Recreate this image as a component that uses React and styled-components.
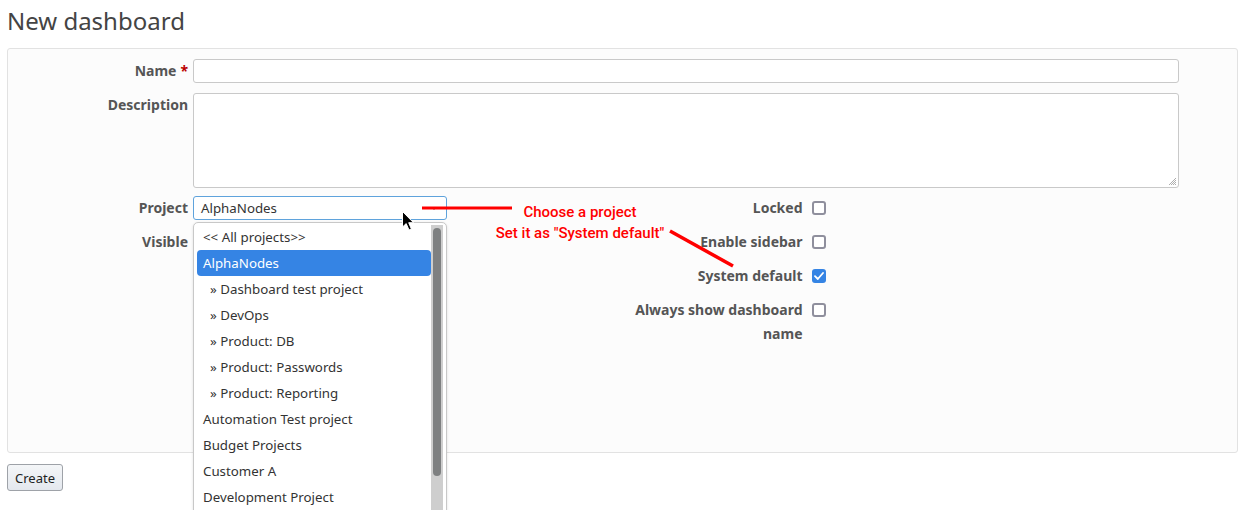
import React from "react";
import styled, { createGlobalStyle } from "styled-components";

const GlobalStyle = createGlobalStyle`
  html, body { margin: 0; padding: 0; overflow: hidden; background: #fff; }
  body { font-family: "Noto Sans", "Open Sans", sans-serif; color: #333; }
  * { box-sizing: border-box; }
`;

const Page = styled.div`
  position: relative;
  padding: 6px 11px 0 7px;
  height: 510px;
  overflow: hidden;
`;

const Title = styled.h2`
  margin: 0 0 12px;
  font-size: 24px;
  line-height: 30px;
  font-weight: 400;
  color: #444;
`;

const Box = styled.div`
  background: #fcfcfc;
  border: 1px solid #e2e2e2;
  border-radius: 3px;
  padding: 10px 0 96px;
`;

const FieldRow = styled.div`
  display: grid;
  grid-template-columns: 180px 1fr;
  column-gap: 5px;
  align-items: ${(p) => (p.$top ? "start" : "center")};
  padding-right: ${(p) => (p.$wide ? "58px" : "0")};
  margin-bottom: 10px;
`;

const Label = styled.label`
  text-align: right;
  font-weight: 700;
  font-size: 14px;
  line-height: 24px;
  color: #555;
`;

const Required = styled.span`
  color: #bb0000;
  margin-left: 4px;
`;

const TextInput = styled.div`
  height: 24px;
  background: #fff;
  border: 1px solid #c9c9c9;
  border-radius: 3px;
`;

const TextArea = styled.div`
  position: relative;
  height: 95px;
  background: #fff;
  border: 1px solid #c9c9c9;
  border-radius: 3px;
`;

const Grip = styled.svg`
  position: absolute;
  right: 1px;
  bottom: 1px;
`;

const Split = styled.div`
  display: grid;
  grid-template-columns: 1fr 1fr;
  margin-top: -2px;
`;

const Column = styled.div`
  display: flex;
  flex-direction: column;
`;

const SelectWrap = styled.div`
  position: relative;
  width: 254px;
`;

const SelectBox = styled.div`
  height: 24px;
  background: #fff;
  border: 1px solid #5fa3dc;
  border-radius: 3px;
  font-size: 13.3px;
  line-height: 22px;
  padding-left: 7px;
  color: #333;
  display: flex;
  align-items: center;
  justify-content: space-between;
  padding-right: 8px;
`;

const Popup = styled.div`
  position: absolute;
  top: 26px;
  left: 0;
  width: 254px;
  background: #fff;
  border: 1px solid #c8c8c8;
  border-radius: 5px 5px 0 0;
  box-shadow: 0 1px 3px rgba(0, 0, 0, 0.12);
  display: flex;
  padding: 1px 3px 6px;
  z-index: 5;
`;

const OptionList = styled.div`
  flex: 1;
  display: flex;
  flex-direction: column;
`;

const Option = styled.div`
  height: 26px;
  line-height: 26px;
  font-size: 13.3px;
  padding-left: ${(p) => (p.$indent ? "13px" : "6px")};
  color: ${(p) => (p.$active ? "#fff" : "#333")};
  background: ${(p) => (p.$active ? "#3584e4" : "transparent")};
  border-radius: 4px;
  white-space: nowrap;
`;

const Track = styled.div`
  width: 12px;
  margin-top: 1px;
  background: #cecece;
  padding: 3px 2px 0 2px;
`;

const Thumb = styled.div`
  height: 248px;
  background: #7e8081;
  border-radius: 4px;
`;

const CheckRow = styled.div`
  display: grid;
  grid-template-columns: 180px 1fr;
  column-gap: 9px;
  align-items: start;
  margin-bottom: 10px;
`;

const CheckLabel = styled(Label)`
  padding-left: 6px;
`;

const Check = styled.span`
  margin-top: 5px;
  width: 14px;
  height: 14px;
  border-radius: 3px;
  border: ${(p) => (p.$checked ? "none" : "2px solid #8f8f9d")};
  background: ${(p) => (p.$checked ? "#3584e4" : "#fff")};
  display: flex;
  align-items: center;
  justify-content: center;
`;

const Button = styled.button`
  margin-top: 11px;
  height: 27px;
  padding: 0 7px;
  font-family: "Noto Sans", sans-serif;
  font-size: 13px;
  color: #222;
  background: linear-gradient(#f4f6f8, #e4e8ee);
  border: 1px solid #9ea2a8;
  border-radius: 3px;
`;

const Overlay = styled.svg`
  position: absolute;
  left: 0;
  top: 0;
  pointer-events: none;
  z-index: 10;
`;

const Note = styled.div`
  position: absolute;
  left: 474px;
  top: 202px;
  width: 212px;
  text-align: center;
  font-family: Roboto, "Liberation Sans", sans-serif;
  font-size: 15px;
  font-weight: 500;
  line-height: 21px;
  color: #ff0000;
  z-index: 10;
`;

const Cursor = styled.svg`
  position: absolute;
  left: 401px;
  top: 210px;
  z-index: 11;
`;

const options = [
  { t: "<< All projects>>" },
  { t: "AlphaNodes", active: true },
  { t: "» Dashboard test project", indent: true },
  { t: "» DevOps", indent: true },
  { t: "» Product: DB", indent: true },
  { t: "» Product: Passwords", indent: true },
  { t: "» Product: Reporting", indent: true },
  { t: "Automation Test project" },
  { t: "Budget Projects" },
  { t: "Customer A" },
  { t: "Development Project" },
];

const checks = [
  { l: "Locked" },
  { l: "Enable sidebar" },
  { l: "System default", c: true },
  { l: "Always show dashboard name" },
];

function CheckMark() {
  return (
    <svg width="10" height="8" viewBox="0 0 10 8">
      <path d="M1 4.2 L3.8 7 L9 1" fill="none" stroke="#fff" strokeWidth="1.8" strokeLinecap="round" strokeLinejoin="round" />
    </svg>
  );
}

export default function App() {
  return (
    <>
      <GlobalStyle />
      <Page>
        <Title>New dashboard</Title>
        <Box>
          <FieldRow $wide>
            <Label>
              Name<Required>*</Required>
            </Label>
            <TextInput />
          </FieldRow>
          <FieldRow $wide $top>
            <Label>Description</Label>
            <TextArea>
              <Grip width="10" height="10" viewBox="0 0 10 10">
                <path d="M9 2 L2 9 M9 4 L4 9 M9 6 L6 9 M9 8 L8 9" stroke="#999" strokeWidth="0.8" />
              </Grip>
            </TextArea>
          </FieldRow>
          <Split>
            <Column>
              <FieldRow>
                <Label>Project</Label>
                <SelectWrap>
                  <SelectBox>
                    <span>AlphaNodes</span>
                    <svg width="8" height="5" viewBox="0 0 8 5">
                      <path d="M1 1 L4 4 L7 1" fill="none" stroke="#b8b8b8" strokeWidth="1" />
                    </svg>
                  </SelectBox>
                  <Popup>
                    <OptionList>
                      {options.map((o) => (
                        <Option key={o.t} $active={o.active} $indent={o.indent}>
                          {o.t}
                        </Option>
                      ))}
                    </OptionList>
                    <Track>
                      <Thumb />
                    </Track>
                  </Popup>
                </SelectWrap>
              </FieldRow>
              <FieldRow>
                <Label>Visible</Label>
                <span />
              </FieldRow>
            </Column>
            <Column>
              {checks.map((c) => (
                <CheckRow key={c.l}>
                  <CheckLabel>{c.l}</CheckLabel>
                  <Check $checked={c.c}>{c.c && <CheckMark />}</Check>
                </CheckRow>
              ))}
            </Column>
          </Split>
        </Box>
        <Button>Create</Button>
        <Overlay width="1249" height="510" viewBox="0 0 1249 510">
          <line x1="422" y1="208" x2="512" y2="208" stroke="#ff0000" strokeWidth="3" />
          <line x1="670" y1="231" x2="733" y2="266" stroke="#ff0000" strokeWidth="3.5" />
        </Overlay>
        <Note>
          Choose a project
          <br />
          Set it as "System default"
        </Note>
        <Cursor width="14" height="22" viewBox="0 0 14 22">
          <path d="M1.5 1.5 L1.5 17 L5.2 13.6 L8 20 L10.4 19 L7.7 12.7 L12.5 12.7 Z" fill="#000" stroke="#fff" strokeWidth="1" strokeLinejoin="round" />
        </Cursor>
      </Page>
    </>
  );
}
